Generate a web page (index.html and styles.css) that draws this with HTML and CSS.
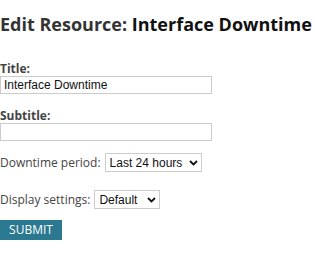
FILE: index.html
```html
<!DOCTYPE html>
<html>
<head>
<meta charset="utf-8">
<link rel="stylesheet" href="styles.css">
</head>
<body>
<h1 class="page-title"><span class="muted">Edit Resource:</span> Interface Downtime</h1>
<form class="form">
  <div class="field">
    <label class="field-label">Title:</label>
    <input class="text-input" type="text" value="Interface Downtime">
  </div>
  <div class="field field-sub">
    <label class="field-label">Subtitle:</label>
    <input class="text-input" type="text" value="">
  </div>
  <div class="inline-field first-inline">
    <span class="inline-label">Downtime period:</span>
    <span class="select select-period">Last 24 hours<svg class="chev" width="9" height="6" viewBox="0 0 9 6"><path d="M1 1 L4.5 4.5 L8 1" fill="none" stroke="#111" stroke-width="1.8"/></svg></span>
  </div>
  <div class="inline-field second-inline">
    <span class="inline-label">Display settings:</span>
    <span class="select select-display">Default<svg class="chev" width="9" height="6" viewBox="0 0 9 6"><path d="M1 1 L4.5 4.5 L8 1" fill="none" stroke="#111" stroke-width="1.8"/></svg></span>
  </div>
  <button class="submit" type="button">SUBMIT</button>
</form>
</body>
</html>
```
FILE: styles.css
```css
html, body {
  margin: 0;
  padding: 0;
  background: #fff;
}
body {
  font-family: "Open Sans", sans-serif;
  color: #333;
}
.page-title {
  margin: 12px 0 0 0;
  font-size: 18px;
  line-height: 24px;
  font-weight: 700;
  color: #111;
  white-space: nowrap;
}
.muted {
  color: #333;
}
.form {
  display: flex;
  flex-direction: column;
  align-items: flex-start;
  margin-top: 25px;
}
.field {
  display: flex;
  flex-direction: column;
  align-items: flex-start;
}
.field-sub {
  margin-top: 14px;
}
.field-label {
  font-family: "Open Sans", sans-serif;
  font-size: 12px;
  line-height: 15px;
  font-weight: 700;
  color: #444;
}
.text-input {
  box-sizing: border-box;
  width: 212px;
  height: 18px;
  margin: 0;
  padding: 0 3px;
  border: 1px solid #ccc;
  font-family: "Liberation Sans", Arial, sans-serif;
  font-size: 12px;
  color: #111;
  outline: none;
}
.inline-field {
  display: flex;
  align-items: center;
  gap: 4px;
}
.first-inline {
  margin-top: 12px;
}
.second-inline {
  margin-top: 18px;
}
.inline-label {
  font-size: 12px;
  color: #444;
}
.select {
  box-sizing: border-box;
  display: flex;
  align-items: center;
  justify-content: space-between;
  height: 19px;
  padding: 0 3px 0 4px;
  border: 1px solid #ccc;
  font-family: "Liberation Sans", Arial, sans-serif;
  font-size: 12px;
  color: #111;
  background: #fff;
}
.select-period {
  width: 97px;
}
.select-display {
  width: 66px;
}
.chev {
  display: block;
}
.submit {
  margin-top: 11px;
  box-sizing: border-box;
  width: 62px;
  height: 20px;
  padding: 0;
  border: none;
  background: #2b7891;
  color: #fff;
  font-family: "Open Sans", sans-serif;
  font-size: 12px;
  line-height: 20px;
  text-align: center;
}
```
